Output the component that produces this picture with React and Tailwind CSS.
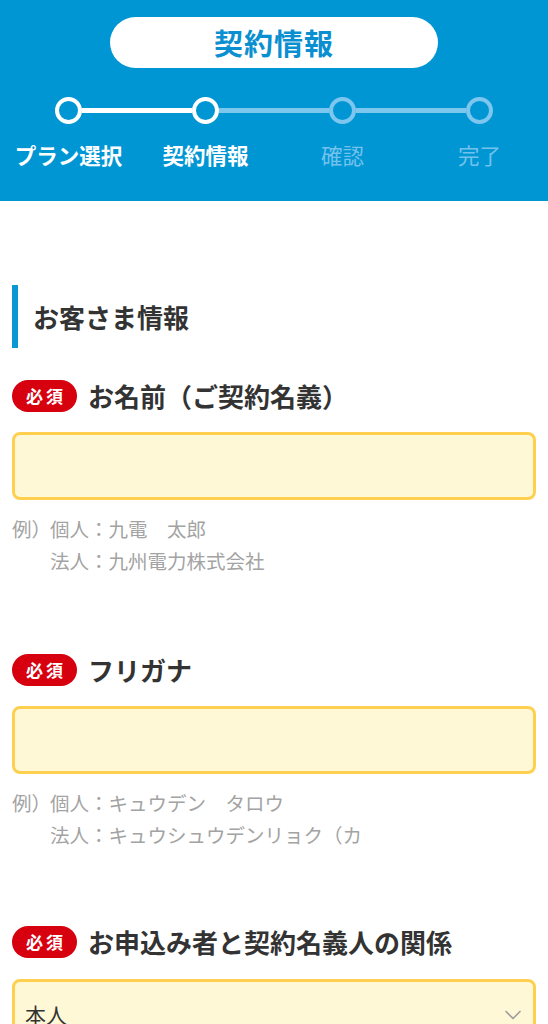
import React from "react";
import { ChevronDown } from "lucide-react";

const font = { fontFamily: '"Noto Sans CJK JP", "Noto Sans", sans-serif' };

function Step({ label, active, leftColor, rightColor }) {
  return (
    <div className="flex flex-col items-center">
      <div className="flex items-center w-full h-[26px]">
        <div className={`flex-1 h-[5px] ${leftColor}`} />
        <div
          className={`w-[27px] h-[27px] rounded-full border-[4px] shrink-0 ${
            active ? "border-white" : "border-[#7dc6ee]"
          }`}
        />
        <div className={`flex-1 h-[5px] ${rightColor}`} />
      </div>
      <div
        className={`mt-[16px] text-[21.5px] leading-[32px] ${
          active ? "text-white font-bold" : "text-[#74c2ec]"
        }`}
      >
        {label}
      </div>
    </div>
  );
}

function Badge() {
  return (
    <span className="inline-flex items-center justify-center w-[65px] h-[32px] rounded-full bg-[#d7000f] text-white text-[17px] font-bold tracking-[3px] pl-[3px]">
      必須
    </span>
  );
}

function FieldLabel({ children }) {
  return (
    <div className="flex items-center gap-[11px]">
      <Badge />
      <span className="text-[26px] font-bold text-[#333333] leading-[32px]">
        {children}
      </span>
    </div>
  );
}

function Input() {
  return (
    <div className="mt-[20px] h-[68px] rounded-[8px] border-[3px] border-[#ffd04f] bg-[#fff8d6]" />
  );
}

function Example({ a, b }) {
  return (
    <div className="mt-[13px] text-[19.5px] leading-[32px] text-[#a3a3a3]">
      <div className="flex">
        <span className="w-[38px] shrink-0 whitespace-nowrap">例）</span>
        <span>{a}</span>
      </div>
      <div className="flex">
        <span className="w-[38px] shrink-0" />
        <span>{b}</span>
      </div>
    </div>
  );
}

export default function App() {
  return (
    <div className="w-[548px] h-[1024px] overflow-hidden bg-white" style={font}>
      <header className="h-[201px] bg-[#0096d4] pt-[17px]">
        <div className="mx-auto w-[328px] h-[51px] rounded-full bg-white flex items-center justify-center">
          <span className="text-[29px] font-bold text-[#0a8fd0] tracking-[1px]">
            契約情報
          </span>
        </div>
        <div className="grid grid-cols-4 mt-[29px]">
          <Step label="プラン選択" active leftColor="bg-transparent" rightColor="bg-white" />
          <Step label="契約情報" active leftColor="bg-white" rightColor="bg-[#7dc6ee]" />
          <Step label="確認" leftColor="bg-[#7dc6ee]" rightColor="bg-[#7dc6ee]" />
          <Step label="完了" leftColor="bg-[#7dc6ee]" rightColor="bg-transparent" />
        </div>
      </header>

      <main className="px-[12px] pt-[84px]">
        <div className="flex items-center h-[63px] border-l-[6px] border-[#0a98d4] pl-[15px]">
          <span className="text-[26px] font-bold text-[#333333]">お客さま情報</span>
        </div>

        <div className="mt-[32px]">
          <FieldLabel>お名前（ご契約名義）</FieldLabel>
          <Input />
          <Example a="個人：九電　太郎" b="法人：九州電力株式会社" />
        </div>

        <div className="mt-[77px]">
          <FieldLabel>フリガナ</FieldLabel>
          <Input />
          <Example a="個人：キュウデン　タロウ" b="法人：キュウシュウデンリョク（カ" />
        </div>

        <div className="mt-[75px]">
          <FieldLabel>お申込み者と契約名義人の関係</FieldLabel>
          <div className="mt-[21px] h-[68px] rounded-[8px] border-[3px] border-[#ffd04f] bg-[#fff8d6] flex items-center justify-between pl-[10px] pr-[6px] pt-[4px]">
            <span className="text-[21px] text-[#333333]">本人</span>
            <ChevronDown className="w-[28px] h-[28px] text-[#a0a0a0]" strokeWidth={1.5} />
          </div>
        </div>
      </main>
    </div>
  );
}
